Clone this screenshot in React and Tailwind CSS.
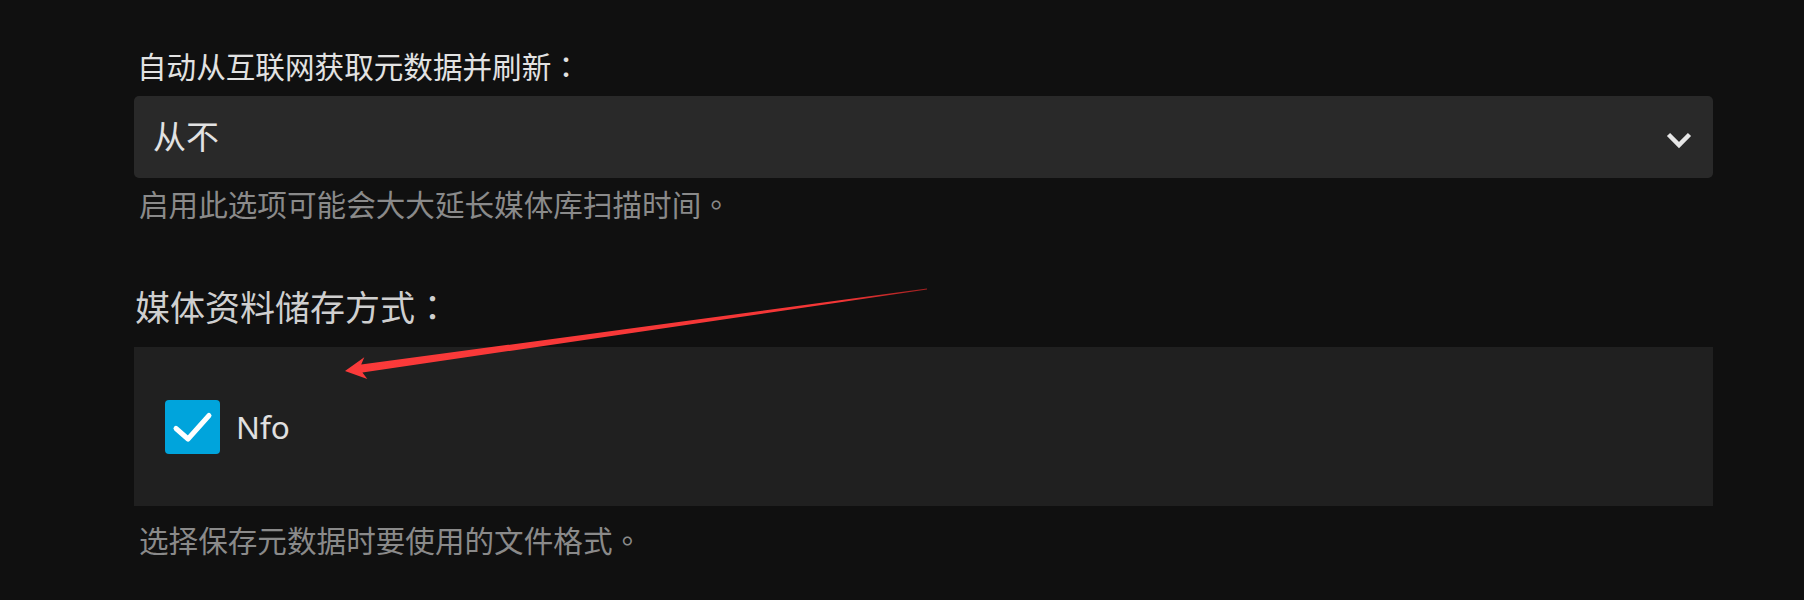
import React from "react";

const FONT = { fontFamily: '"Noto Sans", "Noto Sans CJK SC", sans-serif' };
const TC = { fontFamily: '"Noto Sans", "Noto Sans CJK TC", "Noto Sans CJK SC", sans-serif' };

function P({ children }) {
  return <span style={TC}>{children}</span>;
}

function Chevron() {
  return (
    <svg width="26" height="24" viewBox="0 0 26 24" className="block">
      <polyline
        points="2.5,9.5 13,20 23.5,9.5"
        fill="none"
        stroke="#e6e6e6"
        strokeWidth="4.5"
        strokeLinecap="butt"
        strokeLinejoin="miter"
      />
    </svg>
  );
}

function Check() {
  return (
    <div className="w-[55px] h-[54px] rounded-[4px] bg-[#00a4dc] flex items-center justify-center shrink-0">
      <svg width="55" height="54" viewBox="0 0 55 54" className="block">
        <polyline
          points="11,28.5 23,39 44,15.5"
          fill="none"
          stroke="#ffffff"
          strokeWidth="5"
          strokeLinecap="round"
          strokeLinejoin="round"
        />
      </svg>
    </div>
  );
}

function Arrow() {
  return (
    <svg
      width="1804"
      height="600"
      viewBox="0 0 1804 600"
      className="absolute left-0 top-0 pointer-events-none"
    >
      <defs>
        <linearGradient id="tailfade" x1="345" y1="371" x2="927" y2="289" gradientUnits="userSpaceOnUse">
          <stop offset="0" stopColor="#fb3a3a" />
          <stop offset="0.85" stopColor="#f43636" />
          <stop offset="1" stopColor="#a02020" />
        </linearGradient>
      </defs>
      <polygon
        points="345,371 364.3,357.2 361.2,364.6 927,288.6 927,289.4 362.4,372.6 367.3,379"
        fill="url(#tailfade)"
      />
    </svg>
  );
}

export default function App() {
  return (
    <div className="relative min-h-[600px] w-full bg-[#101010] overflow-hidden" style={FONT}>
      <div className="pt-[49px] pl-[134px] pr-[91px]">
        <div className="h-[36px] text-[29.6px] leading-[36px] text-[#e2e2e2] pl-[3px]">
          自动从互联网获取元数据并刷新<P>：</P>
        </div>
        <div className="mt-[11px] h-[82px] rounded-[5px] bg-[#292929] flex items-center justify-between pl-[19px] pr-[21px]">
          <span className="text-[33px] leading-[40px] text-[#e2e2e2]">从不</span>
          <Chevron />
        </div>
        <div className="mt-[9px] h-[36px] text-[29.6px] leading-[36px] text-[#8a8a8a] pl-[5px]">
          启用此选项可能会大大延长媒体库扫描时间<P>。</P>
        </div>
        <div className="mt-[64px] h-[42px] text-[35px] leading-[42px] text-[#cfcfcf] pl-[1px]">
          媒体资料储存方式<P>：</P>
        </div>
        <div className="mt-[18px] h-[159px] bg-[#202020] flex items-center pl-[31px] gap-[16px]">
          <Check />
          <span className="text-[31.5px] leading-[40px] text-[#e0e0e0]">Nfo</span>
        </div>
        <div className="mt-[17px] h-[36px] text-[29.6px] leading-[36px] text-[#8a8a8a] pl-[5px]">
          选择保存元数据时要使用的文件格式<P>。</P>
        </div>
      </div>
      <Arrow />
    </div>
  );
}
